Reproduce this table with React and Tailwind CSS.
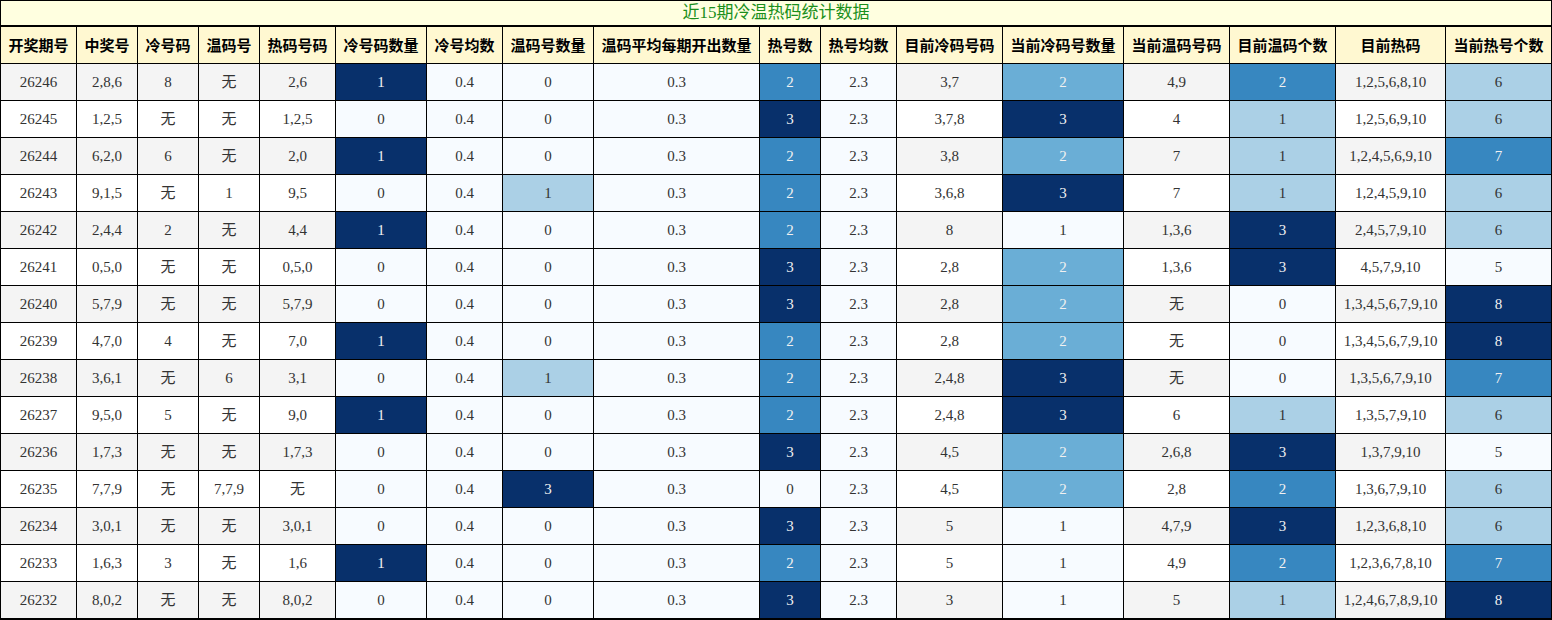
const HEADERS = [
  '开奖期号', '中奖号', '冷号码', '温码号', '热码号码', '冷号码数量', '冷号均数', '温码号数量',
  '温码平均每期开出数量', '热号数', '热号均数', '目前冷码号码', '当前冷码号数量', '当前温码号码',
  '目前温码个数', '目前热码', '当前热号个数',
]

const ROWS = [
  ['26246', '2,8,6', '8', '无', '2,6', 1, 0.4, 0, 0.3, 2, 2.3, '3,7', 2, '4,9', 2, '1,2,5,6,8,10', 6],
  ['26245', '1,2,5', '无', '无', '1,2,5', 0, 0.4, 0, 0.3, 3, 2.3, '3,7,8', 3, '4', 1, '1,2,5,6,9,10', 6],
  ['26244', '6,2,0', '6', '无', '2,0', 1, 0.4, 0, 0.3, 2, 2.3, '3,8', 2, '7', 1, '1,2,4,5,6,9,10', 7],
  ['26243', '9,1,5', '无', '1', '9,5', 0, 0.4, 1, 0.3, 2, 2.3, '3,6,8', 3, '7', 1, '1,2,4,5,9,10', 6],
  ['26242', '2,4,4', '2', '无', '4,4', 1, 0.4, 0, 0.3, 2, 2.3, '8', 1, '1,3,6', 3, '2,4,5,7,9,10', 6],
  ['26241', '0,5,0', '无', '无', '0,5,0', 0, 0.4, 0, 0.3, 3, 2.3, '2,8', 2, '1,3,6', 3, '4,5,7,9,10', 5],
  ['26240', '5,7,9', '无', '无', '5,7,9', 0, 0.4, 0, 0.3, 3, 2.3, '2,8', 2, '无', 0, '1,3,4,5,6,7,9,10', 8],
  ['26239', '4,7,0', '4', '无', '7,0', 1, 0.4, 0, 0.3, 2, 2.3, '2,8', 2, '无', 0, '1,3,4,5,6,7,9,10', 8],
  ['26238', '3,6,1', '无', '6', '3,1', 0, 0.4, 1, 0.3, 2, 2.3, '2,4,8', 3, '无', 0, '1,3,5,6,7,9,10', 7],
  ['26237', '9,5,0', '5', '无', '9,0', 1, 0.4, 0, 0.3, 2, 2.3, '2,4,8', 3, '6', 1, '1,3,5,7,9,10', 6],
  ['26236', '1,7,3', '无', '无', '1,7,3', 0, 0.4, 0, 0.3, 3, 2.3, '4,5', 2, '2,6,8', 3, '1,3,7,9,10', 5],
  ['26235', '7,7,9', '无', '7,7,9', '无', 0, 0.4, 3, 0.3, 0, 2.3, '4,5', 2, '2,8', 2, '1,3,6,7,9,10', 6],
  ['26234', '3,0,1', '无', '无', '3,0,1', 0, 0.4, 0, 0.3, 3, 2.3, '5', 1, '4,7,9', 3, '1,2,3,6,8,10', 6],
  ['26233', '1,6,3', '3', '无', '1,6', 1, 0.4, 0, 0.3, 2, 2.3, '5', 1, '4,9', 2, '1,2,3,6,7,8,10', 7],
  ['26232', '8,0,2', '无', '无', '8,0,2', 0, 0.4, 0, 0.3, 3, 2.3, '3', 1, '5', 1, '1,2,4,6,7,8,9,10', 8],
]

// columns shaded with the Blues scale, per column min → max
const GRADIENT_COLS = [5, 6, 7, 8, 9, 10, 12, 14, 16]

// Blues steps (sixths of the range)
const SHADES = {
  0: 'bg-[#f7fbff] text-[#333]',
  1: 'bg-[#d0e1f2] text-[#333]',
  2: 'bg-[#abd0e6] text-[#333]',
  3: 'bg-[#6aaed6] text-[#f1f1f1]',
  4: 'bg-[#3787c0] text-[#f1f1f1]',
  5: 'bg-[#1764ab] text-[#f1f1f1]',
  6: 'bg-[#08306b] text-[#f1f1f1]',
}

const ranges = {}
GRADIENT_COLS.forEach(c => {
  const vals = ROWS.map(r => r[c])
  ranges[c] = [Math.min(...vals), Math.max(...vals)]
})

function cellClass(col, value, rowIdx) {
  if (ranges[col]) {
    const [lo, hi] = ranges[col]
    const norm = hi === lo ? 0 : (value - lo) / (hi - lo)
    return SHADES[Math.round(norm * 6)]
  }
  return rowIdx % 2 === 0 ? 'bg-[#f4f4f4] text-[#333]' : 'bg-white text-[#333]'
}

export default function App() {
  return (
    <div className="w-[1552px] h-[620px] bg-black p-px">
      <div className="grid grid-cols-[75px_60px_60px_60px_75px_90px_75px_90px_165px_60px_75px_105px_120px_105px_105px_109px_105px] grid-rows-[25px_36px] auto-rows-[36px] gap-px">
        {/* Title */}
        <div className="col-span-17 mb-px flex items-center justify-center bg-[#ffffe0] text-[17px] text-[#1b8f1b] font-['Liberation_Serif','Noto_Sans_CJK_SC',serif]">
          近15期冷温热码统计数据
        </div>

        {/* Column headers */}
        {HEADERS.map(h => (
          <div
            key={h}
            className="flex items-center justify-center bg-[#fff8d1] text-[15px] font-bold text-black whitespace-nowrap font-['Noto_Sans_CJK_SC',sans-serif]"
          >
            {h}
          </div>
        ))}

        {/* Body */}
        {ROWS.map((row, r) =>
          row.map((v, c) => (
            <div
              key={`${r}-${c}`}
              className={`flex items-center justify-center text-[15px] whitespace-nowrap font-['Liberation_Serif','Noto_Sans_CJK_SC',serif] ${cellClass(c, v, r)}`}
            >
              {v}
            </div>
          ))
        )}
      </div>
    </div>
  )
}
